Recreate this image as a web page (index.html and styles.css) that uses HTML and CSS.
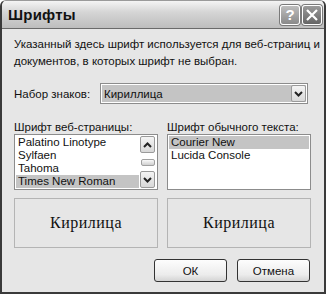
FILE: index.html
```html
<!DOCTYPE html>
<html lang="ru">
  <head>
    <meta charset="UTF-8" />
    <title>Шрифты</title>
    <link rel="stylesheet" href="styles.css">
  </head>
  <body>
    <div class="window">
      <header class="titlebar">
        <h1 class="title">Шрифты</h1>
        <div class="tb-buttons">
          <span class="tb-btn">?</span>
          <span class="tb-btn tb-close">
            <svg width="14" height="14" viewBox="0 0 14 14">
              <path d="M2 2 L12 12 M12 2 L2 12" stroke="#fff" stroke-width="2.2" />
            </svg>
          </span>
        </div>
      </header>

      <main class="dialog">
        <p class="desc">Указанный здесь шрифт используется для веб-страниц и<br>документов, в которых шрифт не выбран.</p>

        <div class="charset">
          <span class="label">Набор знаков:</span>
          <div class="combo">
            <span class="combo-value">Кириллица</span>
            <span class="arrow-btn">
              <svg width="9" height="6" viewBox="0 0 9 6"><path d="M1 1 L4.5 4.5 L8 1" fill="none" stroke="#222" stroke-width="2" /></svg>
            </span>
          </div>
        </div>

        <div class="columns">
          <section class="col">
            <span class="label">Шрифт веб-страницы:</span>
            <div class="listbox">
              <ul class="items">
                <li>Palatino Linotype</li>
                <li>Sylfaen</li>
                <li>Tahoma</li>
                <li class="selected">Times New Roman</li>
              </ul>
              <div class="scrollbar">
                <span class="arrow-btn">
                  <svg width="9" height="6" viewBox="0 0 9 6"><path d="M1 5 L4.5 1.5 L8 5" fill="none" stroke="#222" stroke-width="2" /></svg>
                </span>
                <div class="track"><span class="thumb"></span></div>
                <span class="arrow-btn">
                  <svg width="9" height="6" viewBox="0 0 9 6"><path d="M1 1 L4.5 4.5 L8 1" fill="none" stroke="#222" stroke-width="2" /></svg>
                </span>
              </div>
            </div>
            <div class="preview">Кирилица</div>
          </section>

          <section class="col">
            <span class="label">Шрифт обычного текста:</span>
            <div class="listbox">
              <ul class="items">
                <li class="selected">Courier New</li>
                <li>Lucida Console</li>
              </ul>
            </div>
            <div class="preview">Кирилица</div>
          </section>
        </div>

        <div class="actions">
          <button class="btn">ОК</button>
          <button class="btn">Отмена</button>
        </div>
      </main>
    </div>
  </body>
</html>
```

FILE: styles.css
```css
*,
*::before,
*::after {
  box-sizing: border-box;
}
:root {
  --face: #e6e6e6;
  --frame: #3a3a3a;
  --edge: #8c8c8c;
  --select: #c4c4c4;
  --text: #111;
}
body {
  margin: 0;
  background: #fff;
  font-family: "Liberation Sans", Arial, sans-serif;
  font-size: 11.5px;
  color: var(--text);
}
.window {
  width: 326px;
  height: 294px;
  display: flex;
  flex-direction: column;
  background: var(--face);
  border: 2px solid var(--frame);
  border-top: 1px solid #9a9a9a;
  border-radius: 6px 6px 0 0;
  overflow: hidden;
}
.titlebar {
  height: 28px;
  flex: none;
  display: flex;
  align-items: center;
  justify-content: space-between;
  padding: 0 2px 0 6px;
  background: linear-gradient(180deg, #f4f4f4 0%, #d6d6d6 40%, #bdbdbd 100%);
  border-bottom: 1px solid #6a6a6a;
}
.title {
  margin: 0;
  font-size: 15px;
  font-weight: 700;
  letter-spacing: 0.2px;
  color: #111;
}
.tb-buttons {
  display: flex;
  gap: 2px;
}
.tb-btn {
  width: 20px;
  height: 20px;
  display: flex;
  align-items: center;
  justify-content: center;
  border: 1px solid #fff;
  border-radius: 3px;
  background: linear-gradient(180deg, #bdbdbd, #8a8a8a);
  color: #fff;
  font-size: 15px;
  font-weight: 700;
  box-shadow: 0 0 0 1px #7a7a7a;
}
.tb-close {
  background: linear-gradient(180deg, #9a9a9a, #666);
}
.dialog {
  flex: 1;
  padding: 7px 13px 0 12px;
  display: flex;
  flex-direction: column;
}
.desc {
  margin: 0;
  line-height: 17px;
  white-space: nowrap;
}
.label {
  white-space: nowrap;
}
.charset {
  display: flex;
  align-items: center;
  margin-top: 13px;
}
.charset .label {
  flex: none;
  width: 86px;
}
.combo {
  flex: 1;
  height: 21px;
  display: flex;
  align-items: center;
  justify-content: space-between;
  margin-right: 3px;
  padding: 1px 1px 1px 3px;
  background: var(--select);
  border: 1px solid var(--edge);
  box-shadow: inset 0 0 0 1px #fff;
}
.arrow-btn {
  width: 15px;
  height: 17px;
  display: flex;
  align-items: center;
  justify-content: center;
  background: linear-gradient(180deg, #f4f4f4, #d8d8d8);
  border: 1px solid #9a9a9a;
  border-radius: 2px;
}
.columns {
  display: flex;
  gap: 9px;
  margin-top: 17px;
}
.col {
  flex: 1;
  min-width: 0;
  display: flex;
  flex-direction: column;
}
.col .label {
  line-height: 12px;
}
.listbox {
  height: 56px;
  margin-top: 1px;
  display: flex;
  background: #fff;
  border: 1px solid var(--edge);
}
.items {
  flex: 1;
  margin: 0;
  padding: 1px;
  list-style: none;
}
.items li {
  height: 13px;
  line-height: 13px;
  padding-left: 2px;
  white-space: nowrap;
}
.items .selected {
  background: var(--select);
}
.scrollbar {
  width: 17px;
  display: flex;
  flex-direction: column;
  padding: 1px 1px 1px 0;
}
.track {
  flex: 1;
  display: flex;
  align-items: center;
  padding: 0 1px;
}
.thumb {
  width: 100%;
  height: 7px;
  background: linear-gradient(180deg, #fafafa, #cfcfcf);
  border: 1px solid #a0a0a0;
  border-radius: 2px;
}
.preview {
  height: 50px;
  margin-top: 8px;
  display: flex;
  align-items: center;
  justify-content: center;
  border: 1px solid #b4b4b4;
  font-family: "Liberation Serif", serif;
  font-size: 16px;
  letter-spacing: 0.5px;
}
.actions {
  display: flex;
  justify-content: flex-end;
  gap: 10px;
  margin-top: 11px;
  margin-right: 1px;
}
.btn {
  width: 73px;
  height: 23px;
  padding: 0;
  font-family: "Liberation Sans", sans-serif;
  font-size: 11.5px;
  color: var(--text);
  background: linear-gradient(180deg, #fdfdfd 0%, #ececec 70%, #d4d4d4 100%);
  border: 1px solid #333;
  border-radius: 3px;
}
```
